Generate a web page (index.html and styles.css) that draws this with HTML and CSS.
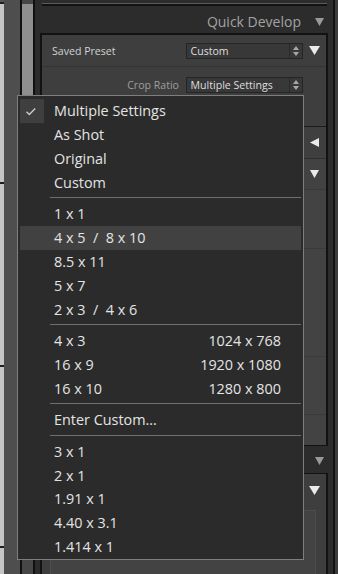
FILE: index.html
```html
<!DOCTYPE html>
<html>
<head>
<meta charset="utf-8">
<link rel="stylesheet" href="styles.css">
</head>
<body>
<div class="app">
  <div class="film">
    <div class="film-top"></div>
    <div class="film-seg s1"></div>
    <div class="film-seg s2"></div>
    <div class="film-seg s3"></div>
    <div class="film-seg s4"></div>
  </div>
  <div class="gutter"></div>
  <div class="vline"></div>
  <div class="scroll"><div class="thumb"></div></div>
  <div class="vline"></div>
  <div class="main">
    <div class="topbar"></div>
    <div class="sect-head qd">
      <span class="sect-title">Quick Develop</span>
      <svg class="tri-gray" viewBox="0 0 9 8"><polygon points="0,0 9,0 4.5,8"/></svg>
    </div>
    <div class="panel">
      <div class="qd-row preset">
        <span class="lbl">Saved Preset</span>
        <div class="select">
          <span class="sel-text">Custom</span>
          <span class="spin"><svg viewBox="0 0 6 10"><polygon points="0,4 6,4 3,0"/><polygon points="0,6 6,6 3,10"/></svg></span>
        </div>
        <span class="tri-cell"><svg class="tri-white" viewBox="0 0 11 9"><polygon points="0,0 11,0 5.5,9"/></svg></span>
      </div>
      <div class="qd-row crop">
        <span class="lbl">Crop Ratio</span>
        <div class="select">
          <span class="sel-text">Multiple Settings</span>
          <span class="spin"><svg viewBox="0 0 6 10"><polygon points="0,4 6,4 3,0"/><polygon points="0,6 6,6 3,10"/></svg></span>
        </div>
        <span class="tri-cell"></span>
      </div>
      <div class="side-row r-a"><span></span><span class="tri-cell"></span></div>
      <div class="side-row r-wb"><span></span><span class="tri-cell"><svg class="tri-left" viewBox="0 0 9 9"><polygon points="9,0 9,9 0,4.5"/></svg></span></div>
      <div class="side-row r-tone"><span></span><span class="tri-cell"><svg class="tri-down" viewBox="0 0 9 8"><polygon points="0,0 9,0 4.5,8"/></svg></span></div>
      <div class="side-row r-1"></div>
      <div class="side-row r-2"></div>
      <div class="side-row r-3"></div>
      <div class="side-row r-4"></div>
    </div>
    <div class="sect-head kw">
      <svg class="tri-gray" viewBox="0 0 9 8"><polygon points="0,0 9,0 4.5,8"/></svg>
    </div>
    <div class="panel2">
      <div class="p2-head"><span></span><span class="tri-cell"><svg class="tri-white" viewBox="0 0 11 9"><polygon points="0,0 11,0 5.5,9"/></svg></span></div>
      <div class="p2-box"></div>
    </div>
  </div>
  <div class="vline"></div>
  <div class="redge"></div>
</div>

<div class="menu">
  <div class="mi"><span class="check"><svg viewBox="0 0 24 24"><polyline points="6.5,12.8 9.3,15.5 15.2,9.6"/></svg></span><span>Multiple Settings</span><span></span></div>
  <div class="mi"><span></span><span>As Shot</span><span></span></div>
  <div class="mi"><span></span><span>Original</span><span></span></div>
  <div class="mi"><span></span><span>Custom</span><span></span></div>
  <div class="sep"></div>
  <div class="mi"><span></span><span>1 x 1</span><span></span></div>
  <div class="mi hl"><span></span><span>4 x 5  /  8 x 10</span><span></span></div>
  <div class="mi"><span></span><span>8.5 x 11</span><span></span></div>
  <div class="mi"><span></span><span>5 x 7</span><span></span></div>
  <div class="mi"><span></span><span>2 x 3  /  4 x 6</span><span></span></div>
  <div class="sep"></div>
  <div class="mi"><span></span><span>4 x 3</span><span class="res">1024 x 768</span></div>
  <div class="mi"><span></span><span>16 x 9</span><span class="res">1920 x 1080</span></div>
  <div class="mi"><span></span><span>16 x 10</span><span class="res">1280 x 800</span></div>
  <div class="sep"></div>
  <div class="mi"><span></span><span>Enter Custom...</span><span></span></div>
  <div class="sep"></div>
  <div class="mi"><span></span><span>3 x 1</span><span></span></div>
  <div class="mi"><span></span><span>2 x 1</span><span></span></div>
  <div class="mi"><span></span><span>1.91 x 1</span><span></span></div>
  <div class="mi"><span></span><span>4.40 x 3.1</span><span></span></div>
  <div class="mi"><span></span><span>1.414 x 1</span><span></span></div>
</div>
</body>
</html>
```

FILE: styles.css
```css
* { box-sizing: border-box; margin: 0; padding: 0; }
html, body { width: 338px; height: 574px; overflow: hidden; }
body {
  background: #2c2c2c;
  font-family: "Open Sans", "Noto Sans", sans-serif;
  position: relative;
}
.app { display: flex; height: 574px; overflow: hidden; }

/* left filmstrip edge */
.film { width: 4px; flex-shrink: 0; display: flex; flex-direction: column; gap: 2px; background: #1e1e1e; }
.film-top { height: 2px; flex-shrink: 0; background: #555; }
.film-seg { background: #c5c5c5; flex-shrink: 0; }
.s1 { height: 178px; }
.s2 { height: 181px; }
.s3 { height: 179px; }
.s4 { flex: 1; }
.gutter { width: 16px; flex-shrink: 0; background: #4e4e4e; }
.vline { width: 2px; flex-shrink: 0; background: #111; }
.scroll { width: 11px; flex-shrink: 0; background: #474747; padding-top: 4px; }
.thumb { height: 110px; background: #8f8f8f; }

/* main column */
.main { width: 298px; flex-shrink: 0; display: flex; flex-direction: column; background: #2c2c2c; overflow: hidden; }
.main > * { flex-shrink: 0; }
.topbar {
  margin: 3px 6px 0 7px;
  height: 3px;
  border-top: 1px solid #5a5a5a;
  border-bottom: 2px solid #121212;
}
.sect-head {
  height: 27px;
  padding: 5px 9px 0 0;
  display: flex;
  align-items: center;
  justify-content: flex-end;
  gap: 14px;
}
.sect-head.kw { padding-top: 3px; }
.sect-title { font-size: 14px; color: #a3a3a3; line-height: 1; }
.tri-gray { width: 9px; height: 8px; display: block; }
.tri-gray polygon { fill: #9a9a9a; }

.panel {
  margin: 0 5px;
  height: 413px;
  border: 2px solid #121212;
  border-bottom-width: 1px;
  background: #3e3e3e;
}
.qd-row {
  display: grid;
  grid-template-columns: 144px 117px 1fr;
  align-items: center;
}
.preset { height: 32px; border-bottom: 1px solid #343434; }
.crop { height: 35px; }
.lbl { font-size: 10.6px; padding-left: 10px; color: #d2d2d2; white-space: nowrap; }
.crop .lbl { text-align: right; padding: 0 7px 0 0; color: #9e9e9e; }
.select {
  height: 16px;
  border: 1px solid #252525;
  background: #383838;
  display: grid;
  grid-template-columns: 1fr 13px;
  align-items: center;
}
.sel-text { font-size: 10.6px; color: #dedede; padding-left: 3.5px; line-height: 14px; white-space: nowrap; }
.spin {
  height: 14px;
  border-left: 1px solid #2a2a2a;
  display: flex;
  align-items: center;
  justify-content: center;
}
.spin svg { width: 6px; height: 10px; display: block; }
.spin polygon { fill: #a8a8a8; }
.tri-cell { display: flex; justify-content: center; align-items: center; }
.tri-white { width: 11px; height: 9px; display: block; }
.tri-white polygon, .tri-left polygon, .tri-down polygon { fill: #eaeaea; }
.tri-left { width: 9px; height: 9px; display: block; }
.tri-down { width: 9px; height: 8px; display: block; }

.side-row { display: grid; grid-template-columns: 1fr 23px; align-items: center; }
.r-a { height: 25px; border-bottom: 1px solid #1c1c1c; }
.r-wb { height: 32px; border-bottom: 1px solid #2e2e2e; background: #3f3f3f; }
.r-tone { height: 31px; border-bottom: 1px solid #393939; background: #424242; }
.r-1 { height: 59px; border-bottom: 1px solid #3a3a3a; background: #434343; }
.r-2 { height: 108px; border-bottom: 1px solid #3a3a3a; background: #434343; }
.r-3 { height: 58px; border-bottom: 1px solid #3a3a3a; background: #434343; }
.r-4 { height: 30px; background: #434343; }

.panel2 {
  margin: 0 5px;
  flex: 1 0 auto;
  border: 2px solid #121212;
  border-top-width: 1px;
  border-bottom: none;
  background: #3e3e3e;
}
.p2-head { height: 33px; display: grid; grid-template-columns: 1fr 23px; align-items: center; }
.p2-box { margin: 3px 10px 0 8px; height: 80px; border: 1px solid #4d4d4d; background: #434343; }

.redge { width: 3px; flex-shrink: 0; background: #3b3b3b; }

/* popup menu */
.menu {
  position: absolute;
  left: 17px;
  top: 95px;
  width: 287px;
  border: 1px solid #7e7e7e;
  background: #2b2b2b;
  padding: 3px 2px 0;
  font-size: 14.4px;
  color: #e4e4e4;
}
.mi {
  height: 23.85px;
  display: grid;
  grid-template-columns: 24px 1fr auto;
  column-gap: 10px;
  align-items: center;
  padding-right: 20px;
  white-space: pre;
}
.mi.hl { background: #414141; }
.check {
  height: 23.85px;
  background: #3f3f3f;
  display: flex;
  align-items: center;
  justify-content: center;
}
.check svg { width: 24px; height: 24px; display: block; }
.check polyline { fill: none; stroke: #cccccc; stroke-width: 1.4; }
.sep { height: 7.6px; padding: 3px 0 0 30px; }
.sep::before { content: ""; display: block; height: 1px; background: #6e6e6e; }
```
